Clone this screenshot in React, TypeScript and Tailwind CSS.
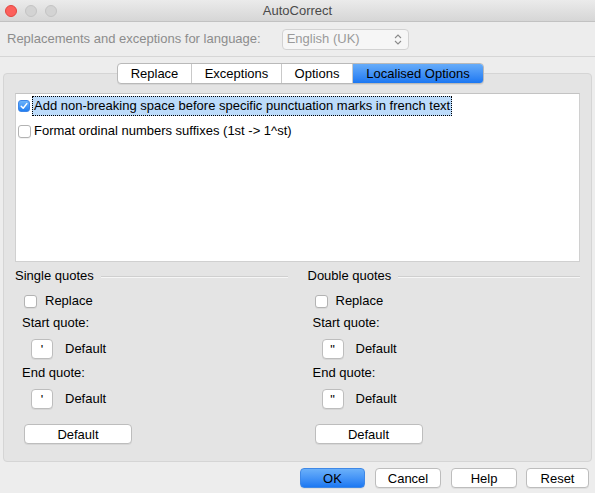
import { ReactNode } from 'react';

// ── SMALL CONTROLS ──
function CheckBox({ checked = false }: { checked?: boolean }) {
  if (checked) {
    return (
      <span className="flex h-[12px] w-[12px] shrink-0 items-center justify-center rounded-[3px] border border-[#3d86e8] bg-gradient-to-b from-[#6cb3fa] to-[#1e7ef2]">
        <svg width="8" height="8" viewBox="0 0 8 8">
          <path d="M1.2 4.2 L3.2 6.2 L6.8 1.6" fill="none" stroke="#fff" strokeWidth="1.5" strokeLinecap="round" strokeLinejoin="round" />
        </svg>
      </span>
    );
  }
  return <span className="block h-[13px] w-[13px] shrink-0 rounded-[3px] border border-[#b3b3b3] bg-white shadow-[0_1px_0_rgba(0,0,0,0.05)]" />;
}

function Btn({ children, className = '', primary = false }: { children: ReactNode; className?: string; primary?: boolean }) {
  const look = primary
    ? 'border-[#3f88e6] bg-gradient-to-b from-[#6ab0fa] to-[#1b78f2] text-black'
    : 'border-[#bdbdbd] bg-white text-black';
  return (
    <button
      type="button"
      className={`flex h-[20px] items-center justify-center rounded-[4px] border text-[13px] leading-none shadow-[0_1px_0_rgba(0,0,0,0.06)] ${look} ${className}`}
    >
      {children}
    </button>
  );
}

// ── QUOTE GROUP ──
function QuoteGroup({ title, glyph, shift }: { title: string; glyph: string; shift: string }) {
  const QuoteRow = () => (
    <div className={`mt-[8px] flex h-[20px] items-center ${shift}`}>
      <Btn className="ml-[16px] w-[22px] text-[11px]">{glyph}</Btn>
      <span className="ml-[12px]">Default</span>
    </div>
  );
  return (
    <div className="flex flex-col">
      <div className="flex h-[16px] items-center">
        <span>{title}</span>
        <span className="ml-[7px] h-px flex-1 bg-[#cfcfcf] shadow-[0_1px_0_#f6f6f6]" />
      </div>
      <div className={`mt-[9px] flex h-[16px] items-center ${shift}`}>
        <span className="ml-[9px]"><CheckBox /></span>
        <span className="ml-[8px]">Replace</span>
      </div>
      <div className={`mt-[6px] flex h-[16px] items-center ${shift}`}>
        <span className="ml-[7px]">Start quote:</span>
      </div>
      <QuoteRow />
      <div className={`mt-[6px] flex h-[16px] items-center ${shift}`}>
        <span className="ml-[7px]">End quote:</span>
      </div>
      <QuoteRow />
      <div className={`mt-[15px] flex ${shift}`}>
        <Btn className="ml-[9px] w-[108px]">Default</Btn>
      </div>
    </div>
  );
}

const tabs = ['Replace', 'Exceptions', 'Options', 'Localised Options'];
const tabW = ['w-[73px]', 'w-[90px]', 'w-[71px]', 'w-[131px]'];

export default function App() {
  return (
    <div
      className="h-[493px] w-[595px] overflow-hidden bg-[#ededed] text-[13px] text-black"
      style={{ fontFamily: '"Liberation Sans", Arial, sans-serif' }}
    >
      {/* title bar */}
      <div className="relative flex h-[22px] items-center border-b border-[#c2c2c2] bg-gradient-to-b from-[#ebebeb] to-[#d6d6d6]">
        <div className="ml-[5px] flex gap-[8px]">
          <span className="h-[12px] w-[12px] rounded-full border border-[#e2463f] bg-[#fc605c]" />
          <span className="h-[12px] w-[12px] rounded-full border border-[#c4c4c4] bg-[#d3d3d3]" />
          <span className="h-[12px] w-[12px] rounded-full border border-[#c4c4c4] bg-[#d3d3d3]" />
        </div>
        <span className="absolute inset-x-0 text-center text-[13px] text-[#4a4a4a]">AutoCorrect</span>
      </div>

      {/* language row */}
      <div className="flex h-[35px] items-center border-b border-[#d6d6d6] pl-[7px] text-[#8c8c8c]">
        <span>Replacements and exceptions for language:</span>
        <div className="ml-[21px] flex h-[21px] w-[127px] items-center rounded-[4px] border border-[#d2d2d2] bg-[#f6f6f6] pl-[4px] pr-[6px] text-[#9a9a9a]">
          <span className="flex-1">English (UK)</span>
          <svg width="8" height="11" viewBox="0 0 8 11">
            <path d="M1 4 L4 1 L7 4 M1 7 L4 10 L7 7" fill="none" stroke="#8a8a8a" strokeWidth="1.1" />
          </svg>
        </div>
      </div>

      {/* tabs */}
      <div className="relative z-10 mt-[6px] flex justify-center pl-[6px]">
        <div className="flex h-[21px] overflow-hidden rounded-[4px] border border-[#b9b9b9] bg-white shadow-[0_1px_0_rgba(0,0,0,0.06)]">
          {tabs.map((t, i) => (
            <div
              key={t}
              className={`flex items-center justify-center ${tabW[i]} ${i > 0 ? 'border-l border-[#c9c9c9]' : ''} ${
                i === 3 ? 'border-[#3f88e6] bg-gradient-to-b from-[#66acf9] to-[#1a77f2]' : ''
              }`}
            >
              {t}
            </div>
          ))}
        </div>
      </div>

      {/* panel */}
      <div className="-mt-[11px] ml-[3px] h-[389px] w-[589px] rounded-[4px] border border-[#d5d5d5] bg-[#e4e4e4] px-[11px] pt-[19px]">
        <div className="h-[169px] w-[565px] border border-[#d0d0d0] border-t-[#c3c3c3] bg-white pl-[1px] pt-[2px]">
          <div className="flex h-[20px] items-center">
            <span className="ml-[1px]"><CheckBox checked /></span>
            <span className="ml-[2px] flex h-[20px] items-center border border-dotted border-black bg-[#bcdbfa] pl-[1px] pr-[1px]">
              Add non-breaking space before specific punctuation marks in french text
            </span>
          </div>
          <div className="mt-[6px] flex h-[18px] items-center">
            <span className="ml-[1px]"><CheckBox /></span>
            <span className="ml-[3px]">Format ordinal numbers suffixes (1st -&gt; 1^st)</span>
          </div>
        </div>

        <div className="mt-[6px] grid grid-cols-2 gap-[20px]">
          <QuoteGroup title="Single quotes" glyph="'" shift="" />
          <QuoteGroup title="Double quotes" glyph={'"'} shift="-ml-[2px]" />
        </div>
      </div>

      {/* dialog buttons */}
      <div className="mt-[6px] flex justify-end gap-[10px] pr-[6px]">
        <Btn primary className="w-[65px]">OK</Btn>
        <Btn className="w-[66px]">Cancel</Btn>
        <Btn className="w-[66px]">Help</Btn>
        <Btn className="w-[63px] -ml-px">Reset</Btn>
      </div>
    </div>
  );
}
